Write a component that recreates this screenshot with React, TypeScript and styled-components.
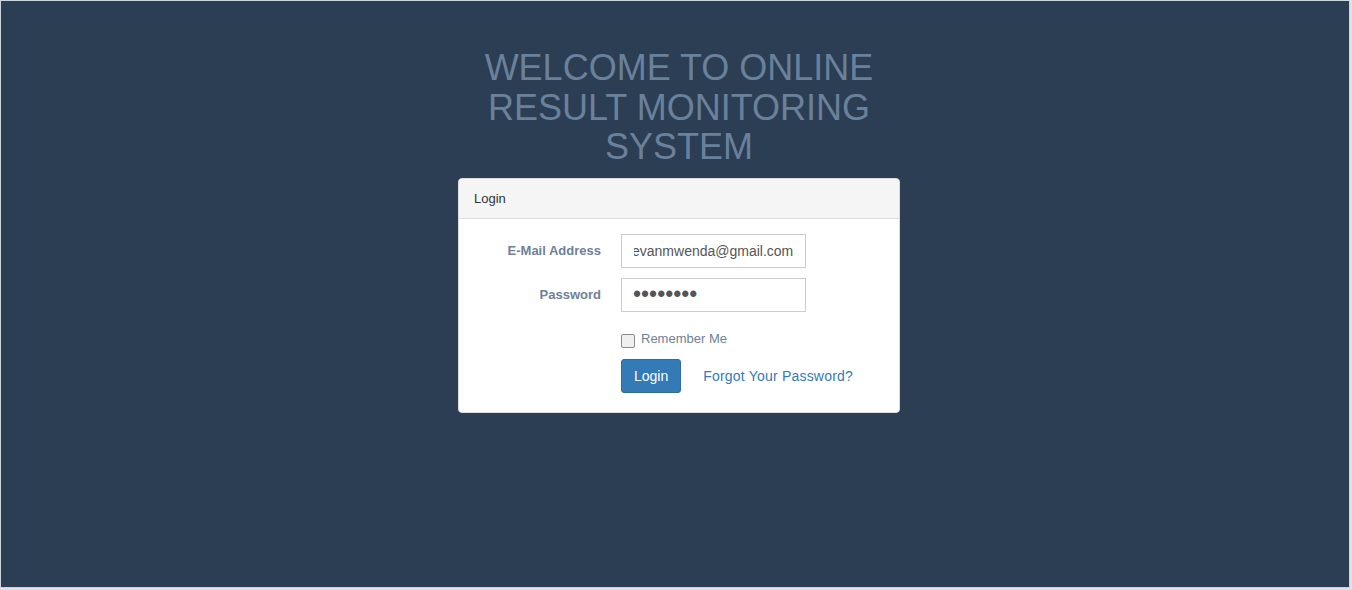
import React, { useEffect, useRef } from "react";
import styled, { createGlobalStyle } from "styled-components";

const Global = createGlobalStyle`
  html, body { margin: 0; padding: 0; }
  body {
    background: #dde2e8;
    font-family: "Liberation Sans", Arial, Helvetica, sans-serif;
    font-size: 13px;
    color: #333;
  }
  * { box-sizing: border-box; }
`;

const Frame = styled.div`
  width: 1350px;
  height: 588px;
  border: 1px solid #cdd5df;
  background: #2b3e53;
  display: flex;
  flex-direction: column;
  align-items: center;
  padding: 47px 0 0 8px;
`;

const Title = styled.h1`
  width: 442px;
  margin: 0 0 11px;
  font-size: 36px;
  line-height: 1.1;
  font-weight: 400;
  text-align: center;
  color: #6a819b;
`;

const Panel = styled.div`
  width: 442px;
  background: #fff;
  border: 1px solid #dcdcdc;
  border-radius: 4px;
  overflow: hidden;
`;

const PanelHeading = styled.div`
  padding: 10px 15px;
  line-height: 19px;
  font-size: 13px;
  color: #333;
  background: #f5f5f5;
  border-bottom: 1px solid #ddd;
`;

const PanelBody = styled.div`
  padding: 15px 15px 19px;
  display: flex;
  flex-direction: column;
`;

const Row = styled.div<{ $mt?: number }>`
  display: flex;
  align-items: center;
  gap: 20px;
  margin-top: ${(p) => p.$mt ?? 0}px;
`;

const Label = styled.label`
  width: 127px;
  text-align: right;
  font-weight: 700;
  font-size: 13px;
  line-height: 20px;
  color: #6d8199;
`;

const Spacer = styled.div`
  width: 127px;
`;

const Input = styled.input<{ $mask?: boolean }>`
  width: 185px;
  height: 34px;
  padding: ${(p) => (p.$mask ? "6px 12px 6px 11px" : "6px 12px")};
  font-family: "Liberation Sans", Arial, Helvetica, sans-serif;
  font-size: ${(p) => (p.$mask ? "23px" : "14px")};
  line-height: 20px;
  color: #555;
  border: 1px solid #ccc;
  border-radius: 0;
  background: #fff;
  outline: none;
`;

const CheckLabel = styled.label`
  display: flex;
  align-items: flex-start;
  gap: 6px;
  font-size: 13px;
  line-height: 20px;
  color: #6d8199;
`;

const Check = styled.input`
  appearance: none;
  width: 14px;
  height: 14px;
  margin: 5px 0 0;
  border: 1px solid #8a8a8a;
  border-radius: 2px;
  background: #efefef;
`;

const Button = styled.button`
  padding: 6px 12px;
  font-family: "Liberation Sans", Arial, Helvetica, sans-serif;
  font-size: 14px;
  line-height: 20px;
  color: #fff;
  background: #337ab7;
  border: 1px solid #2e6da4;
  border-radius: 3px;
`;

const LinkButton = styled.a`
  padding: 6px 12px;
  margin-left: -10px;
  font-size: 14px;
  line-height: 20px;
  letter-spacing: 0.2px;
  color: #337ab7;
  text-decoration: none;
`;

export default function App() {
  const emailRef = useRef<HTMLInputElement>(null);
  useEffect(() => {
    const el = emailRef.current;
    if (el) el.scrollLeft = el.scrollWidth;
  }, []);
  return (
    <>
      <Global />
      <Frame>
        <Title>WELCOME TO ONLINE RESULT MONITORING SYSTEM</Title>
        <Panel>
          <PanelHeading>Login</PanelHeading>
          <PanelBody>
            <Row>
              <Label htmlFor="email">E-Mail Address</Label>
              <Input
                id="email"
                ref={emailRef}
                type="email"
                defaultValue="evanmwenda@gmail.com"
              />
            </Row>
            <Row $mt={10}>
              <Label htmlFor="password">Password</Label>
              <Input id="password" $mask type="password" defaultValue="password" />
            </Row>
            <Row $mt={17}>
              <Spacer />
              <CheckLabel>
                <Check type="checkbox" />
                Remember Me
              </CheckLabel>
            </Row>
            <Row $mt={10}>
              <Spacer />
              <Button type="button">Login</Button>
              <LinkButton href="#">Forgot Your Password?</LinkButton>
            </Row>
          </PanelBody>
        </Panel>
      </Frame>
    </>
  );
}
